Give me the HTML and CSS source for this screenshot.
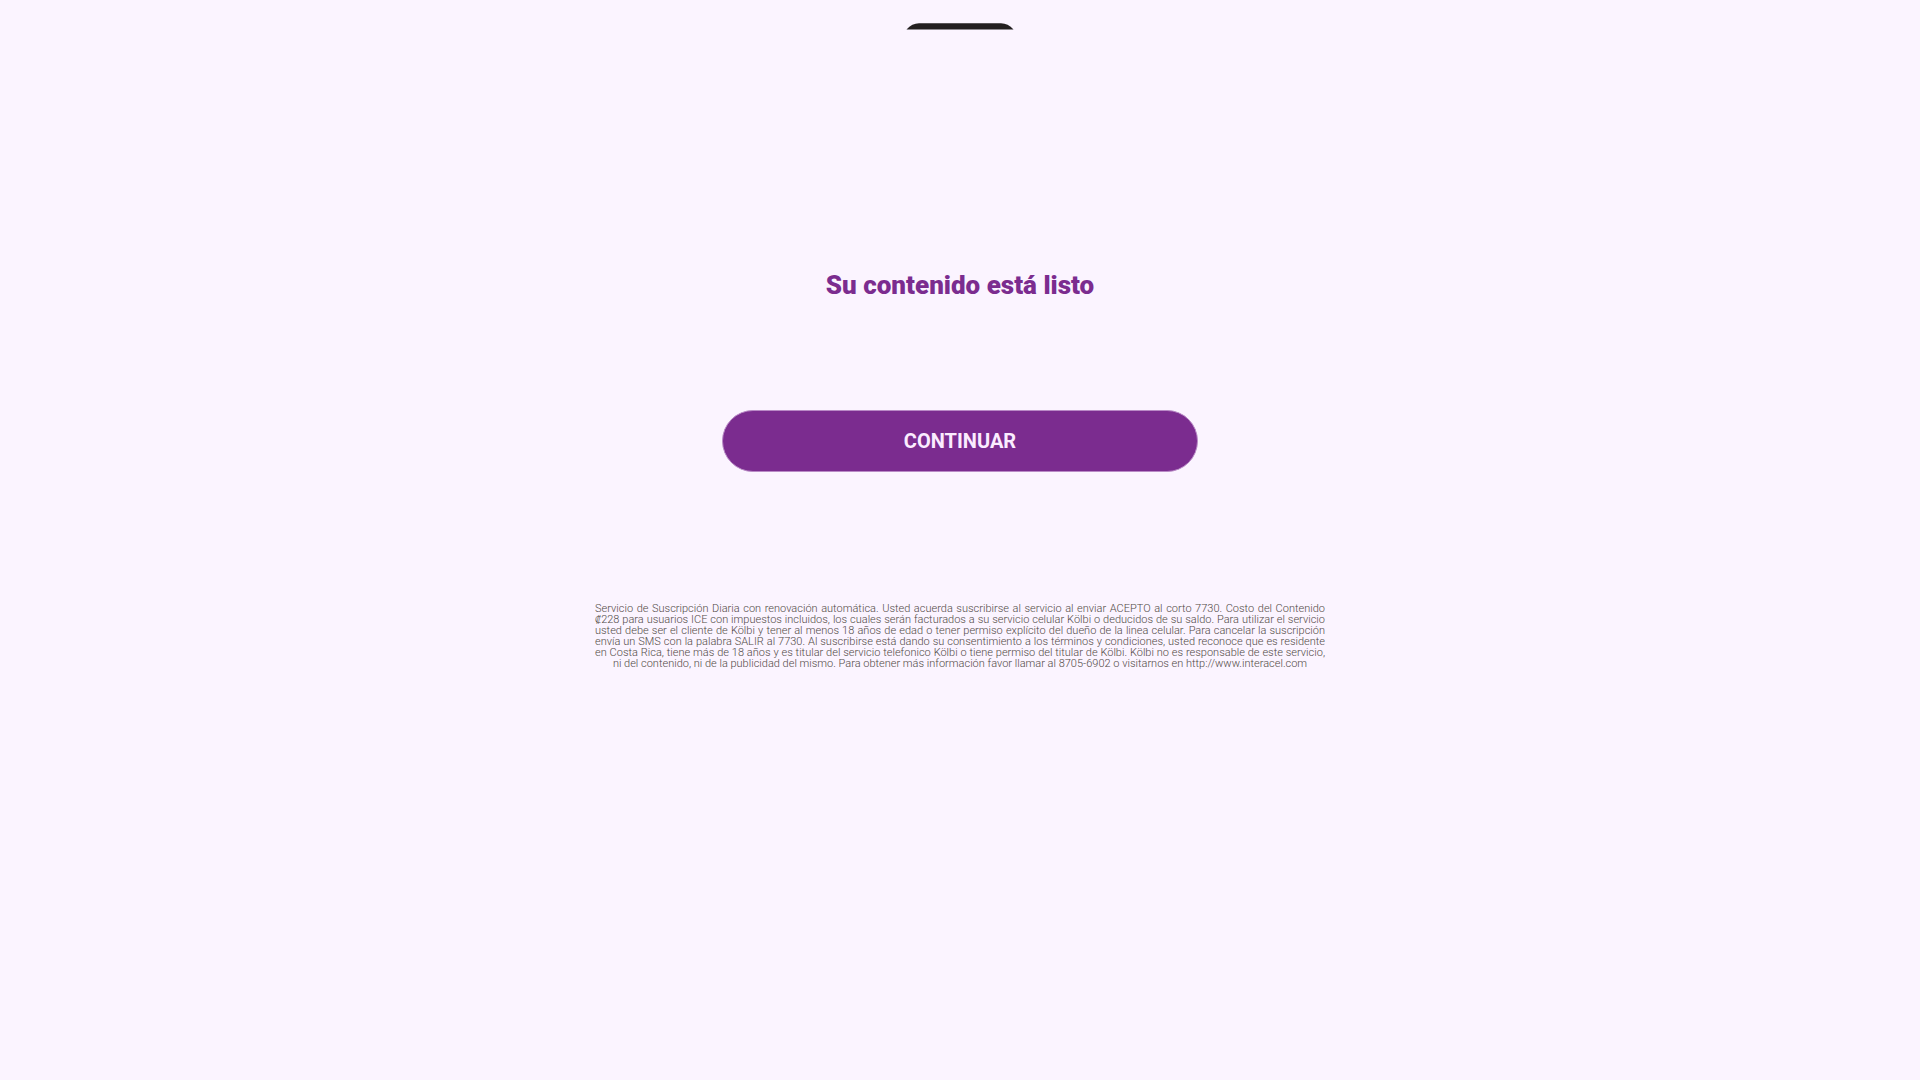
FILE: index.html
```html
<!DOCTYPE html>
<html lang="es">
<head>
    <meta charset="UTF-8">
    <meta name="viewport" content="width=device-width, initial-scale=1.0">
    <title>Su contenido está listo</title>
    <link rel="stylesheet" href="styles.css">
</head>
<body>
    <header class="header">
        <svg class="logo" viewBox="0 0 108 7" width="108" height="7" aria-hidden="true">
            <path d="M.5 6.5 Q6 .3 13 .3 H95 Q102 .3 107.5 6.5 Z" fill="#231f20"/>
        </svg>
    </header>
    <main class="content">
        <h1 class="title">Su contenido está listo</h1>
        <button type="button" class="btn">CONTINUAR</button>
    </main>
    <footer class="terms">
        <p>Servicio de Suscripción Diaria con renovación automática. Usted acuerda suscribirse al servicio al enviar ACEPTO al corto 7730. Costo del Contenido ₡228 para usuarios ICE con impuestos incluidos, los cuales serán facturados a su servicio celular Kölbi o deducidos de su saldo. Para utilizar el servicio usted debe ser el cliente de Kölbi y tener al menos 18 años de edad o tener permiso explícito del dueño de la linea celular. Para cancelar la suscripción envía un SMS con la palabra SALIR al 7730. Al suscribirse está dando su consentimiento a los términos y condiciones, usted reconoce que es residente en Costa Rica, tiene más de 18 años y es titular del servicio telefonico Kölbi o tiene permiso del titular de Kölbi. Kölbi no es responsable de este servicio, ni del contenido, ni de la publicidad del mismo. Para obtener más información favor llamar al 8705-6902 o visitarnos en http://www.interacel.com</p>
    </footer>
</body>
</html>
```
FILE: styles.css
```css
body {
    font-family: Roboto, "Noto Sans", sans-serif;
    background: #fbf4ff;
    margin: 0;
}
.header {
    display: flex;
    justify-content: center;
    padding-top: 23px;
}
.logo {
    display: block;
}
.content {
    display: flex;
    flex-direction: column;
    align-items: center;
    padding: 239px 20px 0;
}
.title {
    margin: 0;
    font-size: 26px;
    line-height: 32px;
    font-weight: 900;
    color: #7b2c8f;
}
.btn {
    width: 100%;
    max-width: 476px;
    height: 62px;
    margin-top: 109px;
    border: 1px solid #b98ac6;
    border-radius: 31px;
    background: #7b2c8f;
    color: #fbecff;
    font-family: inherit;
    font-size: 20px;
    font-weight: 700;
    cursor: pointer;
}
.terms {
    max-width: 730px;
    margin: 131px auto 0;
}
.terms p {
    margin: 0;
    font-size: 11px;
    line-height: 11px;
    font-weight: 300;
    text-align: justify;
    text-align-last: center;
    color: #524a46;
}
```
